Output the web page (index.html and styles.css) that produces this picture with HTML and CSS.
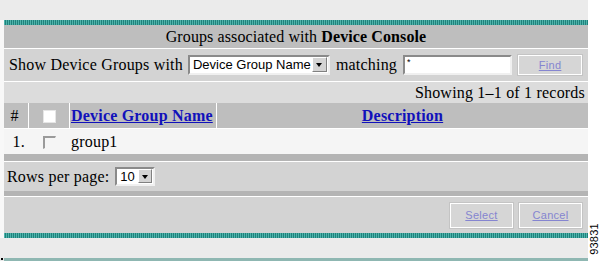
FILE: index.html
```html
<!DOCTYPE html>
<html lang="en">
<head>
    <meta charset="UTF-8">
    <title>Groups associated with Device Console</title>
    <link rel="stylesheet" href="styles.css">
</head>
<body>

    <div class="page">
        <div class="panel">
            <div class="stripe"></div>

            <!-- title -->
            <div class="title-row">Groups associated with <b>Device Console</b></div>

            <!-- filter -->
            <div class="filter-row">
                <span>Show Device Groups with</span>
                <span class="select select-wide">Device Group Name<span class="arrow"></span></span>
                <span class="matching">matching</span>
                <span class="text-input">*</span>
                <a class="btn btn-find" href="#">Find</a>
            </div>

            <div class="showing-row">Showing 1&#8211;1 of 1 records</div>

            <!-- results -->
            <table class="grid">
                <tr class="head">
                    <td class="c-num">#</td>
                    <td class="c-check"><span class="check"></span></td>
                    <td class="c-name"><a href="#">Device Group Name</a></td>
                    <td class="c-desc"><a href="#">Description</a></td>
                </tr>
                <tr class="data">
                    <td class="c-num">1.</td>
                    <td class="c-check"><span class="check check-off"></span></td>
                    <td class="c-name">group1</td>
                    <td class="c-desc"></td>
                </tr>
            </table>

            <div class="band band-tall"></div>

            <div class="rows-row">
                <span>Rows per page:</span>
                <span class="select select-small">10<span class="arrow"></span></span>
            </div>

            <div class="band"></div>

            <div class="button-row">
                <a class="btn" href="#">Select</a>
                <a class="btn" href="#">Cancel</a>
            </div>

            <div class="stripe"></div>
        </div>

        <div class="bottom-line"></div>
        <span class="fig-id">93831</span>
    </div>

</body>
</html>
```

FILE: styles.css
```css
body {
    margin: 0;
    background-color: #fff;
    font-family: "Liberation Serif", "Times New Roman", serif;
    font-size: 16px;
    letter-spacing: 0.2px;
    color: #000;
}
.page {
    position: relative;
    width: 588px;
    height: 261px;
    padding-top: 20px;
    box-sizing: border-box;
    background-color: #ebebeb;
}
.panel {
    border-left: 4px solid #f8f8f8;
}
.stripe {
    height: 5px;
    background: repeating-linear-gradient(90deg, #4fb3ab 0 1px, #1f827c 1px 2px);
}
.title-row {
    height: 23px;
    line-height: 23px;
    text-align: center;
    letter-spacing: 0.1px;
    background-color: #bebebe;
    border-bottom: 1px solid #fff;
}
.filter-row {
    display: flex;
    align-items: center;
    gap: 6px;
    height: 32px;
    padding-left: 5px;
    background-color: #d3d3d3;
    border-bottom: 1px solid #fff;
}
.showing-row {
    height: 21px;
    line-height: 21px;
    text-align: right;
    padding-right: 3px;
    background-color: #dcdcdc;
}

/* fake form controls */
.select, .text-input {
    position: relative;
    display: inline-block;
    box-sizing: border-box;
    background-color: #fff;
    border: 2px solid;
    border-color: #8a8a8a #f0f0f0 #f0f0f0 #8a8a8a;
    font-family: "Liberation Sans", Arial, sans-serif;
    font-size: 13px;
    letter-spacing: 0;
    line-height: 16px;
    padding-left: 3px;
    white-space: nowrap;
    overflow: hidden;
}
.select-wide {
    width: 142px;
    height: 20px;
    margin-left: -1px;
}
.select-small {
    width: 40px;
    height: 19px;
}
.arrow {
    position: absolute;
    top: 0;
    right: 0;
    width: 15px;
    height: 15px;
    margin: 0 1px;
    background-color: #d4d4d4;
    border: 1px solid;
    border-color: #fff #808080 #808080 #fff;
    box-sizing: border-box;
}
.select-small .arrow {
    width: 14px;
    height: 14px;
}
.arrow::after {
    content: "";
    position: absolute;
    left: 3px;
    top: 5px;
    border-left: 3px solid transparent;
    border-right: 3px solid transparent;
    border-top: 4px solid #000;
}
.text-input {
    width: 109px;
    height: 20px;
    font-size: 9px;
    line-height: 10px;
    padding-left: 2px;
}
.btn {
    display: inline-block;
    box-sizing: border-box;
    width: 63px;
    height: 25px;
    line-height: 22px;
    text-align: center;
    background-color: #d6d6d6;
    border: 1px solid #fff;
    box-shadow: 0 0 0 1px #c4c4c4;
    color: #8585d0;
    font-family: "Liberation Sans", Arial, sans-serif;
    font-size: 11px;
    letter-spacing: 0.3px;
}
.btn-find {
    width: 64px;
    height: 20px;
    line-height: 18px;
}

/* results table */
.grid {
    width: 100%;
    border-collapse: collapse;
}
.grid td {
    padding: 0;
    border-left: 1px solid #fff;
}
.grid td:first-child {
    border-left: none;
}
.grid a {
    color: #1111bb;
    font-weight: bold;
}
.head td {
    height: 25px;
    background-color: #bebebe;
}
.data td {
    height: 25px;
    background-color: #f5f5f5;
    border-left-color: #f5f5f5;
    border-top: 1px solid #fff;
}
.c-num {
    width: 21px;
    padding-right: 3px !important;
    text-align: right;
}
.head .c-num {
    text-align: center;
}
.c-check {
    width: 40px;
    text-align: center;
}
.c-name {
    width: 145px;
    padding-left: 1px !important;
    white-space: nowrap;
}
.c-desc {
    text-align: center;
}
.check {
    display: inline-block;
    width: 13px;
    height: 13px;
    vertical-align: middle;
    background-color: #fff;
    box-sizing: border-box;
    border: 1px solid #e6e6e6;
}
.check-off {
    background-color: #f5f5f5;
    border: 1px solid;
    border-color: #9a9a9a #f5f5f5 #f5f5f5 #9a9a9a;
    border-width: 2px 1px 1px 2px;
}

.band {
    height: 5px;
    background-color: #b4b4b4;
    border-bottom: 1px solid #fff;
}
.band-tall {
    height: 7px;
}
.rows-row {
    display: flex;
    align-items: center;
    gap: 6px;
    height: 29px;
    padding-left: 3px;
    background-color: #d3d3d3;
}
.button-row {
    display: flex;
    justify-content: flex-end;
    align-items: center;
    gap: 6px;
    height: 36px;
    padding-right: 6px;
    background-color: #d3d3d3;
}
.bottom-line {
    position: absolute;
    left: 4px;
    right: 0;
    bottom: 0;
    height: 3px;
    background-color: #8fb7b2;
}
.bottom-line::before {
    content: "";
    position: absolute;
    left: -3px;
    top: 0;
    width: 2px;
    height: 2px;
    background-color: #000;
}
.fig-id {
    position: absolute;
    left: 578px;
    top: 233px;
    transform: rotate(-90deg);
    font-family: "Liberation Sans", Arial, sans-serif;
    font-size: 11px;
    color: #000;
}
```
